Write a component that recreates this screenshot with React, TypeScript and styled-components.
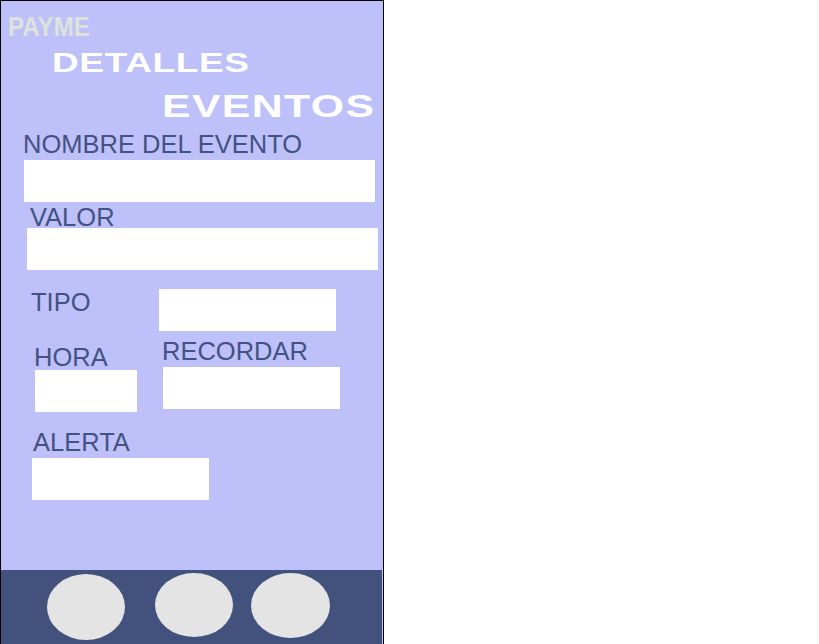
import React from 'react';
import styled, { createGlobalStyle } from 'styled-components';

const GlobalStyle = createGlobalStyle`
html, body {
  margin:0;
  padding:0;
  background:#ffffff;
}
body {
  font-family:"Liberation Sans", Arial, sans-serif;
}
`;

const Phone = styled.div`
width:384px;
height:644px;
box-sizing:border-box;
border:1px solid #000000;
border-bottom:none;
background-color:#bec0fa;
display:flex;
flex-direction:column;
`;

const Brand = styled.div`
margin:12px 0 0 7px;
height:23px;
font-size:23px;
line-height:23px;
font-weight:bold;
color:#dce3dc;
transform:scale(1.05, 1.2);
transform-origin:left top;
`;

interface TitleProps {
    $size: number;
    $x: number;
    $top: number;
    $spacing: number;
    $stretch: number;
}

const Title = styled.div<TitleProps>`
margin:${p => p.$top}px 0 0 ${p => p.$x}px;
height:${p => p.$size}px;
font-size:${p => p.$size}px;
line-height:${p => p.$size}px;
font-weight:bold;
letter-spacing:${p => p.$spacing}px;
color:#ffffff;
white-space:nowrap;
transform:scaleX(${p => p.$stretch});
transform-origin:left top;
`;

const Label = styled.div<{ $x?: number; $top?: number; $width?: number }>`
margin:${p => p.$top ?? 0}px 0 0 ${p => p.$x ?? 0}px;
${p => (p.$width ? `width:${p.$width}px;flex-shrink:0;` : '')}
height:22px;
font-size:25.5px;
line-height:22px;
color:#435282;
white-space:nowrap;
`;

const Field = styled.input<{ $x?: number; $top?: number; $width: number }>`
display:block;
box-sizing:border-box;
margin:${p => p.$top ?? 0}px 0 0 ${p => p.$x ?? 0}px;
width:${p => p.$width}px;
height:42px;
padding:0 8px;
border:none;
outline:none;
background-color:#ffffff;
font-family:inherit;
font-size:16px;
color:#435282;
`;

const Row = styled.div<{ $top: number }>`
display:flex;
align-items:flex-start;
margin-top:${p => p.$top}px;
`;

const Column = styled.div<{ $x: number; $top?: number; $width?: number }>`
display:flex;
flex-direction:column;
margin:${p => p.$top ?? 0}px 0 0 ${p => p.$x}px;
${p => (p.$width ? `width:${p.$width}px;` : '')}
`;

const BottomBar = styled.nav`
display:flex;
align-items:flex-start;
margin-top:auto;
width:381px;
height:74px;
padding-left:46px;
box-sizing:border-box;
background-color:#42527c;
`;

const NavButton = styled.button<{ $x: number; $top: number; $w: number; $h: number }>`
margin:${p => p.$top}px 0 0 ${p => p.$x}px;
width:${p => p.$w}px;
height:${p => p.$h}px;
padding:0;
border:none;
border-radius:50%;
background-color:#e4e4e4;
cursor:pointer;
`;

const App = () => {
    return <>
        <GlobalStyle />
        <Phone>
            <Brand>PAYME</Brand>
            <Title $size={28} $x={51} $top={13} $spacing={0.5} $stretch={1.32}>DETALLES</Title>
            <Title $size={31} $x={161} $top={14} $spacing={1} $stretch={1.38}>EVENTOS</Title>

            <Label $x={22} $top={11}>NOMBRE DEL EVENTO</Label>
            <Field $x={23} $top={5} $width={351} readOnly />

            <Label $x={29} $top={4}>VALOR</Label>
            <Field $x={26} $width={351} readOnly />

            <Row $top={19}>
                <Label $x={30} $top={2} $width={128}>TIPO</Label>
                <Field $width={177} readOnly />
            </Row>

            <Row $top={9}>
                <Column $x={33} $top={6} $width={103}>
                    <Label>HORA</Label>
                    <Field $x={1} $top={2} $width={102} readOnly />
                </Column>
                <Column $x={25}>
                    <Label>RECORDAR</Label>
                    <Field $x={1} $top={5} $width={177} readOnly />
                </Column>
            </Row>

            <Label $x={32} $top={19}>ALERTA</Label>
            <Field $x={31} $top={5} $width={177} readOnly />

            <BottomBar>
                <NavButton $x={0} $top={4} $w={78} $h={66} />
                <NavButton $x={30} $top={3} $w={78} $h={64} />
                <NavButton $x={18} $top={3} $w={79} $h={65} />
            </BottomBar>
        </Phone>
    </>
}

export default App;
